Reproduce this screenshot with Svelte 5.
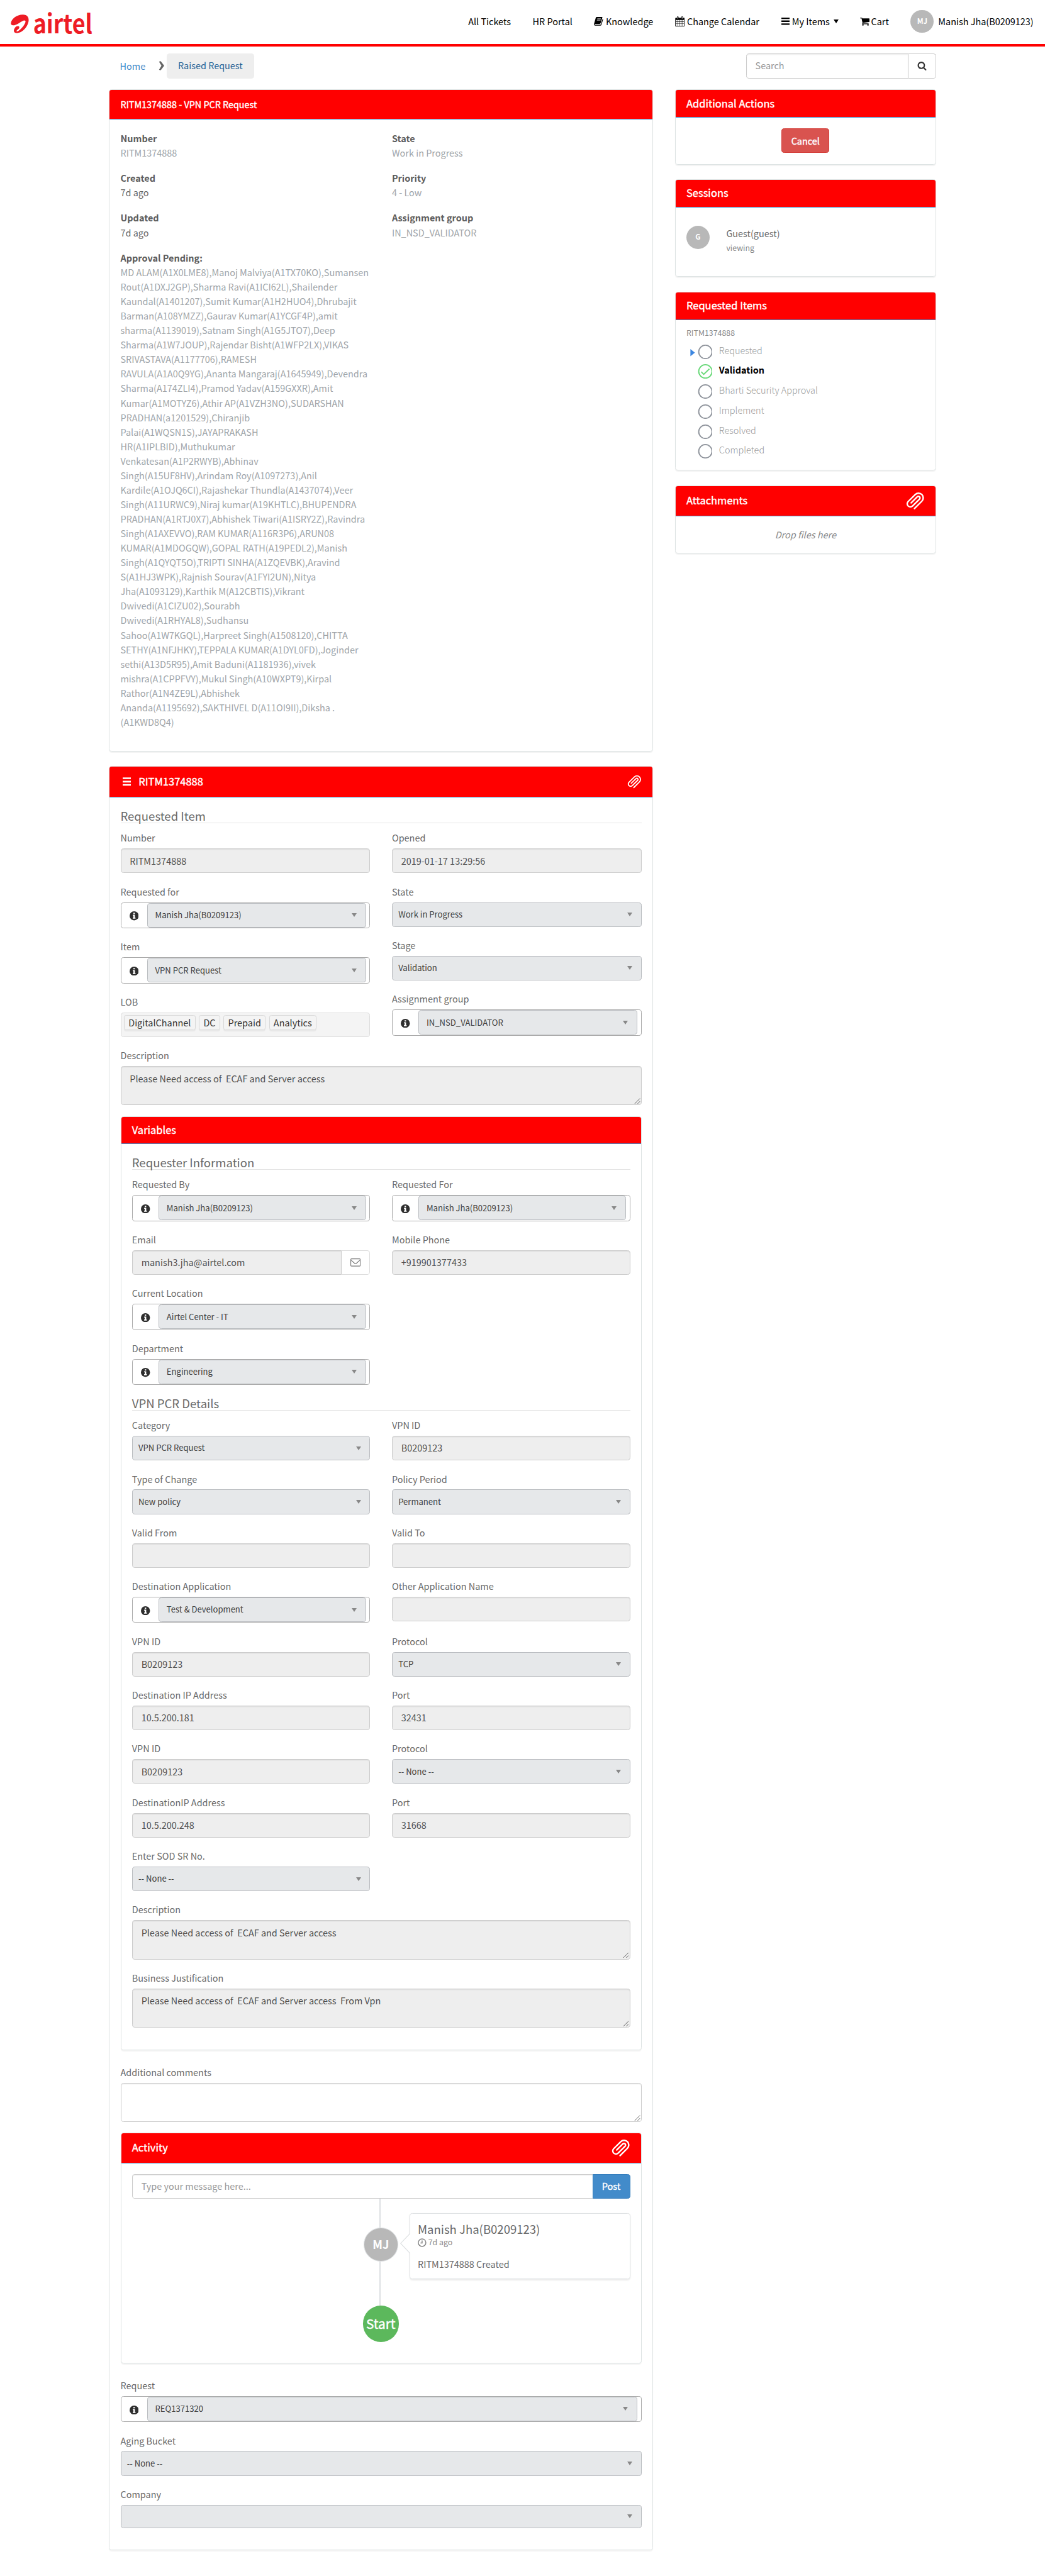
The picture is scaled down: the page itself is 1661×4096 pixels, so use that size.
<script>
  const approvers = [
    'MD ALAM(A1X0LME8),Manoj Malviya(A1TX70KO),Sumansen',
    'Rout(A1DXJ2GP),Sharma Ravi(A1ICI62L),Shailender',
    'Kaundal(A1401207),Sumit Kumar(A1H2HUO4),Dhrubajit',
    'Barman(A108YMZZ),Gaurav Kumar(A1YCGF4P),amit',
    'sharma(A1139019),Satnam Singh(A1G5JTO7),Deep',
    'Sharma(A1W7JOUP),Rajendar Bisht(A1WFP2LX),VIKAS',
    'SRIVASTAVA(A1177706),RAMESH',
    'RAVULA(A1A0Q9YG),Ananta Mangaraj(A1645949),Devendra',
    'Sharma(A174ZLI4),Pramod Yadav(A159GXXR),Amit',
    'Kumar(A1MOTYZ6),Athir AP(A1VZH3NO),SUDARSHAN',
    'PRADHAN(a1201529),Chiranjib',
    'Palai(A1WQSN1S),JAYAPRAKASH',
    'HR(A1IPLBID),Muthukumar',
    'Venkatesan(A1P2RWYB),Abhinav',
    'Singh(A15UF8HV),Arindam Roy(A1097273),Anil',
    'Kardile(A1OJQ6CI),Rajashekar Thundla(A1437074),Veer',
    'Singh(A11URWC9),Niraj kumar(A19KHTLC),BHUPENDRA',
    'PRADHAN(A1RTJ0X7),Abhishek Tiwari(A1ISRY2Z),Ravindra',
    'Singh(A1AXEVVO),RAM KUMAR(A116R3P6),ARUN08',
    'KUMAR(A1MDOGQW),GOPAL RATH(A19PEDL2),Manish',
    'Singh(A1QYQT5O),TRIPTI SINHA(A1ZQEVBK),Aravind',
    'S(A1HJ3WPK),Rajnish Sourav(A1FYI2UN),Nitya',
    'Jha(A1093129),Karthik M(A12CBTIS),Vikrant',
    'Dwivedi(A1CIZU02),Sourabh',
    'Dwivedi(A1RHYAL8),Sudhansu',
    'Sahoo(A1W7KGQL),Harpreet Singh(A1508120),CHITTA',
    'SETHY(A1NFJHKY),TEPPALA KUMAR(A1DYL0FD),Joginder',
    'sethi(A13D5R95),Amit Baduni(A1181936),vivek',
    'mishra(A1CPPFVY),Mukul Singh(A10WXPT9),Kirpal',
    'Rathor(A1N4ZE9L),Abhishek',
    'Ananda(A1195692),SAKTHIVEL D(A11OI9II),Diksha .',
    '(A1KWD8Q4)'
  ];
  const stages = ['Requested', 'Validation', 'Bharti Security Approval', 'Implement', 'Resolved', 'Completed'];
  const tags = ['DigitalChannel', 'DC', 'Prepaid', 'Analytics'];

  // field = [kind, label, value]
  const itemLeft = [
    ['input', 'Number', 'RITM1374888'],
    ['ref', 'Requested for', 'Manish Jha(B0209123)'],
    ['ref', 'Item', 'VPN PCR Request'],
    ['tags', 'LOB', '']
  ];
  const itemRight = [
    ['input', 'Opened', '2019-01-17 13:29:56'],
    ['select', 'State', 'Work in Progress'],
    ['select', 'Stage', 'Validation'],
    ['ref', 'Assignment group', 'IN_NSD_VALIDATOR']
  ];
  const requesterLeft = [
    ['ref', 'Requested By', 'Manish Jha(B0209123)'],
    ['email', 'Email', 'manish3.jha@airtel.com'],
    ['ref', 'Current Location', 'Airtel Center - IT'],
    ['ref', 'Department', 'Engineering']
  ];
  const requesterRight = [
    ['ref', 'Requested For', 'Manish Jha(B0209123)'],
    ['input', 'Mobile Phone', '+919901377433']
  ];
  const accessLeft = [
    ['select', 'Category', 'VPN PCR Request'],
    ['select', 'Type of Change', 'New policy'],
    ['input', 'Valid From', ''],
    ['ref', 'Destination Application', 'Test & Development']
  ];
  const accessRight = [
    ['input', 'VPN ID', 'B0209123'],
    ['select', 'Policy Period', 'Permanent'],
    ['input', 'Valid To', ''],
    ['input', 'Other Application Name', '']
  ];
  const targetLeft = [
    ['input', 'VPN ID', 'B0209123'],
    ['input', 'Destination IP Address', '10.5.200.181'],
    ['input', 'VPN ID', 'B0209123'],
    ['input', 'DestinationIP Address', '10.5.200.248'],
    ['select', 'Enter SOD SR No.', '-- None --']
  ];
  const targetRight = [
    ['select', 'Protocol', 'TCP'],
    ['input', 'Port', '32431'],
    ['select', 'Protocol', '-- None --'],
    ['input', 'Port', '31668']
  ];
</script>

{#snippet clip(size)}
  <svg class="clip" class:large={size === 'large'} viewBox="0 0 24 24">
    <path transform="matrix(0 1 1 0 0 0)" d="M22.2 10.8l-9.7 9.7a6 6 0 0 1-8.9-8.7l9.3-9.4a4.1 4.1 0 0 1 5.9 5.8l-9.2 9.3a2.1 2.1 0 0 1-3-3l8-8.1" />
  </svg>
{/snippet}

{#snippet info()}
  <svg class="info" viewBox="0 0 12 12">
    <circle cx="6" cy="6" r="6" fill="#2e2e2e" />
    <path fill="#fff" d="M5 1.8h2v1.7H5zM4.2 4.5H7v3.9h.8v1.3H4.2V8.400H5V5.800h-.8z" />
  </svg>
{/snippet}

{#snippet grip()}
  <svg class="grip" viewBox="0 0 8 8"><path d="M.5 8 8 .5M4.500 8 8 4.500" /></svg>
{/snippet}

{#snippet area(label, value, plain)}
  <div class="field">
    <div class="label">{label}</div>
    <div class="box area" class:plain>{value}{@render grip()}</div>
  </div>
{/snippet}

{#snippet field(f)}
  <div class="field">
    <div class="label">{f[1]}</div>
    {#if f[0] === 'input'}
      <div class="box input">{f[2]}</div>
    {:else if f[0] === 'select'}
      <div class="box select"><span>{f[2]}</span><i class="arrow"></i></div>
    {:else if f[0] === 'ref'}
      <div class="ref">
        <div class="ref-info">{@render info()}</div>
        <div class="box select"><span>{f[2]}</span><i class="arrow"></i></div>
      </div>
    {:else if f[0] === 'email'}
      <div class="group">
        <div class="box input">{f[2]}</div>
        <div class="mail">
          <svg viewBox="0 0 14 11"><rect x=".5" y=".5" width="13" height="10" rx="1" /><path d="M1 2.500 5.800 6.700Q7 7.600 8.200 6.700L13 2.500" /></svg>
        </div>
      </div>
    {:else}
      <div class="box tags">{#each tags as t}<span>{t}</span>{/each}</div>
    {/if}
  </div>
{/snippet}

{#snippet columns(left, right)}
  <div class="columns">
    <div>{#each left as f}{@render field(f)}{/each}</div>
    <div>{#each right as f}{@render field(f)}{/each}</div>
  </div>
{/snippet}

{#snippet fact(name, value, dark)}
  <div class="fact"><b>{name}</b><span class:dark>{value}</span></div>
{/snippet}

<div class="page">
  <header>
    <svg class="logo" viewBox="0 0 900 300">
      <path d="M90 130C92 95 140 58 190 59C225 60 238 80 237 105C235 150 190 212 135 211C115 210 112 195 117 180C123 162 138 152 150 154C162 156 162 168 155 176C148 184 135 188 137 197C150 204 205 150 211 118C213 105 200 103 188 110C165 122 135 147 108 147C96 147 89 140 90 130Z" />
      <text x="274" y="211" textLength="490" lengthAdjust="spacingAndGlyphs">airtel</text>
    </svg>
    <nav>
      <a>All Tickets</a>
      <a>HR Portal</a>
      <a class="book"><svg viewBox="0 0 26 24"><path d="M8 0h14q2 0 1.300 2L18.500 17q-.7 2.200-3 2.200H4q-1.600 0-1.800 1 0 1.200 1.800 1.200h13.500q1.200 0 1.800-1.800L24 5q1.700.6 1.200 2.300L20.700 21.500q-.8 2.500-3 2.500H3q-3.200-.4-2.900-4L5 2.500Q5.800 0 8 0Z" /><path class="gap" d="M9.300 5h10M8.300 8.800h10" /></svg>Knowledge</a>
      <a class="cal"><svg viewBox="0 0 26 28"><path fill-rule="evenodd" d="M2 4h22q2 0 2 2v20q0 2-2 2H2q-2 0-2-2V6q0-2 2-2ZM2 10v4.500h4.600V10ZM7.700 10v4.500h4.700V10ZM13.500 10v4.500h4.700V10ZM19.300 10v4.500H24V10ZM2 15.600v4.300h4.600v-4.300ZM7.700 15.600v4.300h4.700v-4.300ZM13.500 15.600v4.300h4.700v-4.300ZM19.300 15.600v4.300H24v-4.300ZM2 21v5h4.600v-5ZM7.700 21v5h4.700v-5ZM13.500 21v5h4.700v-5ZM19.300 21v5H24v-5Z" /><path class="ring" d="M7 2v4.500M19 2v4.500" /><path class="gap" d="M7 2v4.500M19 2v4.500" /></svg>Change Calendar</a>
      <a class="list"><svg viewBox="0 0 12 10"><path d="M0 0h12v2H0zM0 4h12v2H0zM0 8h12v2H0z" /></svg>My Items<i class="caret"></i></a>
      <a class="cart"><svg viewBox="0 128 1664 1536"><path d="M640 1536q0 52-38 90t-90 38-90-38-38-90 38-90 90-38 90 38 38 90zm896 0q0 52-38 90t-90 38-90-38-38-90 38-90 90-38 90 38 38 90zm128-1088v512q0 24-16.500 42.500t-40.500 21.500l-1044 122q13 60 13 70 0 16-24 64h920q26 0 45 19t19 45-19 45-45 19h-1024q-26 0-45-19t-19-45q0-11 8-31.500t16-36 21.500-40 15.500-29.500l-177-823h-204q-26 0-45-19t-19-45 19-45 45-19h256q16 0 28.500 6.500t19.500 15.500 13 24.500 8 26 5.500 29.500 4.500 26h1201q26 0 45 19t19 45z" /></svg>Cart</a>
      <a class="user"><span class="avatar">MJ</span>Manish Jha(B0209123)</a>
    </nav>
  </header>

  <div class="container">
    <div class="top">
      <div class="crumbs">
        <a>Home</a>
        <svg viewBox="0 0 8 13"><path d="M.6.800 3 .3 7.800 6.500 3 12.700.6 12.200 4 6.500Z" /></svg>
        <a class="here">Raised Request</a>
      </div>
      <div class="search">
        <div class="query">Search</div>
        <div class="go"><svg viewBox="0 0 1792 1792"><path d="M1216 832q0-185-131.500-316.500t-316.500-131.500-316.500 131.500-131.500 316.500 131.500 316.500 316.500 131.500 316.500-131.500 131.500-316.500zm512 832q0 52-38 90t-90 38q-54 0-90-38l-343-342q-179 124-399 124-143 0-273.500-55.500t-225-150-150-225-55.500-273.500 55.500-273.500 150-225 225-150 273.500-55.500 273.500 55.500 225 150 150 225 55.500 273.500q0 220-124 399l343 343q37 37 37 90z" /></svg></div>
      </div>
    </div>

    <div class="body">
      <main>
        <section class="panel summary">
          <div class="head">RITM1374888 - VPN PCR Request</div>
          <div class="content">
            <div class="columns">
              <div>
                {@render fact('Number', 'RITM1374888', false)}
                {@render fact('Created', '7d ago', true)}
                {@render fact('Updated', '7d ago', true)}
                <div class="fact">
                  <b>Approval Pending:</b>
                  {#each approvers as line}<span>{line}</span>{/each}
                </div>
              </div>
              <div>
                {@render fact('State', 'Work in Progress', false)}
                {@render fact('Priority', '4 - Low', false)}
                {@render fact('Assignment group', 'IN_NSD_VALIDATOR', false)}
              </div>
            </div>
          </div>
        </section>

        <section class="panel record">
          <div class="head">
            <svg class="menu" viewBox="0 0 12 12"><path d="M0 0h12v2.300H0zM0 4.800h12v2.300H0zM0 9.500h12v2.300H0z" /></svg>
            <span>RITM1374888</span>
            {@render clip('small')}
          </div>
          <div class="content">
            <div class="legend">Requested Item</div>
            {@render columns(itemLeft, itemRight)}
            {@render area('Description', 'Please Need access of  ECAF and Server access', false)}

            <section class="panel variables">
              <div class="head">Variables</div>
              <div class="content">
                <div class="legend">Requester Information</div>
                {@render columns(requesterLeft, requesterRight)}
                <div class="legend">VPN PCR Details</div>
                {@render columns(accessLeft, accessRight)}
                {@render columns(targetLeft, targetRight)}
                {@render area('Description', 'Please Need access of  ECAF and Server access', false)}
                {@render area('Business Justification', 'Please Need access of  ECAF and Server access  From Vpn', false)}
              </div>
            </section>

            {@render area('Additional comments', '', true)}

            <section class="panel activity">
              <div class="head"><span>Activity</span>{@render clip('large')}</div>
              <div class="content">
                <div class="post">
                  <div class="message">Type your message here...</div>
                  <div class="send">Post</div>
                </div>
                <div class="timeline">
                  <div class="rail">
                    <div class="line first"></div>
                    <div class="bubble">MJ</div>
                    <div class="line second"></div>
                    <div class="start">Start</div>
                  </div>
                  <div class="card">
                    <svg class="beak" viewBox="0 0 14 28"><path d="M14 0 .7 14 14 28" /></svg>
                    <div class="who">Manish Jha(B0209123)</div>
                    <div class="when"><svg viewBox="0 0 12 12"><circle cx="6" cy="6" r="5.200" /><path d="M6 3v3.500H3.800" /></svg>7d ago</div>
                    <div class="what">RITM1374888 Created</div>
                  </div>
                </div>
              </div>
            </section>

            {@render field(['ref', 'Request', 'REQ1371320'])}
            {@render field(['select', 'Aging Bucket', '-- None --'])}
            <div class="short">{@render field(['select', 'Company', ''])}</div>
          </div>
        </section>
      </main>

      <aside>
        <section class="panel">
          <div class="head">Additional Actions</div>
          <div class="content"><div class="cancel">Cancel</div></div>
        </section>
        <section class="panel sessions">
          <div class="head">Sessions</div>
          <div class="content">
            <span class="avatar">G</span>
            <div><div class="guest">Guest(guest)</div><div class="viewing">viewing</div></div>
          </div>
        </section>
        <section class="panel items">
          <div class="head">Requested Items</div>
          <div class="content">
            <div class="ritm">RITM1374888</div>
            {#each stages as s, i}
              <div class="stage" class:current={i === 1}>
                <svg viewBox="0 0 31 20">
                  {#if i === 0}<path class="tri" d="M.300 6 6.500 11 .300 16Z" />{/if}
                  <circle cx="21" cy="10" r="9.200" />
                  {#if i === 1}<path class="tick" d="M15.200 10.500 18.700 14 26.500 6.500" />{/if}
                </svg>
                <span>{s}</span>
              </div>
            {/each}
          </div>
        </section>
        <section class="panel attachments">
          <div class="head"><span>Attachments</span>{@render clip('large')}</div>
          <div class="content">Drop files here</div>
        </section>
      </aside>
    </div>
  </div>
</div>

<style>
  :global(body) { background: #fff; overflow: hidden; }
  .page {
    zoom: 1.1532;
    width: 1440.400px;
    height: 3551px;
    font-family: 'Noto Sans CJK SC', 'Noto Sans', sans-serif;
    font-size: 12.530px;
    line-height: 19px;
    color: #6a6a6a;
  }
  .page :global(*) { box-sizing: border-box; }
  svg { display: block; flex: none; }

  header { height: 64px; border-bottom: 4px solid #f00; display: flex; justify-content: space-between; }
  .logo { width: 150px; height: 50px; margin-top: 10px; fill: #ee1c25; overflow: visible; }
  .logo text { font-size: 216px; font-weight: 700; }
  nav { display: flex; align-items: center; gap: 30px; height: 59px; padding-right: 16px; color: #000; white-space: nowrap; }
  nav a { display: flex; align-items: center; }
  .book svg { width: 13px; height: 12px; margin-right: 3px; }
  .cal svg { width: 13.500px; height: 14px; margin-right: 3px; }
  .list svg { width: 12px; height: 10px; margin-right: 3px; }
  .cart svg { width: 13px; height: 12px; margin-right: 2px; }
  .gap { stroke: #fff; stroke-width: 1.500; fill: none; }
  .ring { stroke: #000; stroke-width: 4; stroke-linecap: round; }
  .caret { margin-left: 5px; border: 4px solid transparent; border-top: 5.300px solid #000; border-bottom: 0; }
  .avatar {
    width: 32px; height: 32px; border-radius: 50%; background: #b8b8b8; color: #fff; flex: none;
    font-size: 10px; font-weight: 700; display: flex; align-items: center; justify-content: center;
  }
  nav .avatar { margin-right: 6px; }

  .container { width: 1140px; margin: 0 auto; padding-top: 10px; }
  .top { display: flex; justify-content: space-between; height: 34px; margin-bottom: 15.200px; }
  .crumbs { display: flex; align-items: center; padding-left: 15px; color: #428bca; }
  .crumbs svg { width: 8px; height: 13px; margin: 0 3px 0 18px; fill: #666; }
  .here { background: #eee; color: #2a6496; border-radius: 4px; padding: 7px 16px 8px; }
  .search { display: flex; width: 262px; }
  .query {
    flex: 1; border: 1px solid #ccc; border-radius: 4px 0 0 4px; padding: 6px 12px; color: #999;
    box-shadow: inset 0 1px 1px rgba(0, 0, 0, 0.075);
  }
  .go { width: 38px; border: 1px solid #ccc; border-left: 0; border-radius: 0 4px 4px 0; display: flex; align-items: center; justify-content: center; }
  .go svg { width: 13px; height: 13px; fill: #333; }

  .body { display: flex; gap: 30px; align-items: flex-start; }
  main { width: 750px; }
  aside { width: 360px; }
  .panel { border: 1px solid #dde3e3; border-radius: 4px; margin-bottom: 20.270px; box-shadow: 0 1px 1px rgba(0, 0, 0, 0.05); }
  .head {
    height: 38px; background: #f00; border-bottom: 1px solid #428bca; border-radius: 3px 3px 0 0; color: #fff;
    padding: 0 15px; font-size: 14.300px; display: flex; align-items: center; justify-content: space-between;
  }
  .head, .cancel, .send, .start { -webkit-text-stroke: 0.350px #fff; }
  .content { padding: 15px; }
  .clip { width: 20px; height: 19px; fill: none; stroke: #fff; stroke-width: 2; stroke-linecap: round; }
  .clip.large { width: 26px; height: 25px; }

  .summary .head { height: 41px; font-size: 12.480px; }
  .columns { display: grid; grid-template-columns: 1fr 1fr; column-gap: 30px; align-items: start; }
  .fact { margin-bottom: 15px; color: #a0a5a9; line-height: 20px; white-space: nowrap; }
  .fact b, .fact span { display: block; }
  .fact b { color: #5c5c5c; font-weight: 700; }
  .fact .dark { color: #666; }

  .record > .head { height: 43px; justify-content: flex-start; padding: 0 15px 0 18px; }
  .record > .head .clip { margin-left: auto; }
  .menu { width: 11.500px; height: 12px; fill: #fff; margin-right: 10.500px; }
  .legend { height: 20px; line-height: 18.600px; border-bottom: 1px solid #e3e3e3; margin-bottom: 10px; font-size: 16.100px; }
  .field { margin-bottom: 15px; }
  .label { line-height: 20px; margin-bottom: 5px; }
  .box { border: 1px solid #ccc; border-radius: 4px; white-space: pre; }
  .input { height: 34px; padding: 6.500px 12px; background: #eee; color: #505050; box-shadow: inset 0 1px 1px rgba(0, 0, 0, 0.075); }
  .area { height: 54px; padding: 6.500px 12px; background: #eee; color: #505050; box-shadow: inset 0 1px 1px rgba(0, 0, 0, 0.075); position: relative; }
  .area.plain { background: #fff; }
  .grip { position: absolute; right: 1px; bottom: 1px; width: 8px; height: 8px; stroke: #555; stroke-width: 0.800; }
  .select {
    height: 34px; padding: 0 12px 0 8px; background: #e6e8ea; border-color: #b9bcc0; color: #404040; font-size: 11.350px;
    display: flex; align-items: center; justify-content: space-between;
  }
  .select span { padding-bottom: 0.500px; }
  .arrow { border: 3.500px solid transparent; border-top: 5.300px solid #888; border-bottom: 0; }
  .short .select { height: 32px; }
  .ref { height: 36px; border: 1px solid #aaa; border-radius: 4px; display: flex; padding-right: 5px; }
  .ref .select { flex: 1; padding-left: 10px; }
  .ref-info { width: 36px; display: flex; align-items: center; justify-content: center; padding-top: 2px; }
  .info { width: 12.500px; height: 12.500px; }
  .group { display: flex; }
  .group .input { flex: 1; border-radius: 4px 0 0 4px; }
  .mail { width: 39px; border: 1px solid #ddd; border-left: 0; border-radius: 0 4px 4px 0; display: flex; align-items: center; justify-content: center; }
  .mail svg { width: 14px; height: 11px; fill: none; stroke: #777; }
  .tags { height: 34px; padding: 3px 4px; background: #f4f4f4; border-color: #ddd; display: flex; gap: 5px; }
  .tags span { height: 21px; line-height: 19px; padding: 0 5.300px; border: 1px solid #d8d8d8; border-radius: 3px; color: #333; box-shadow: 0 1px 1px rgba(0, 0, 0, 0.050); }

  .activity .head { height: 41px; }
  .activity .content { height: 275px; }
  .post { display: flex; height: 34px; }
  .message { flex: 1; border: 1px solid #ccc; border-right: 0; border-radius: 4px 0 0 4px; padding: 6.500px 12px; color: #999; box-shadow: inset 0 1px 1px rgba(0, 0, 0, 0.075); }
  .send { width: 52px; background: #428bca; border: 1px solid #357ebd; border-radius: 0 4px 4px 0; color: #fff; text-align: center; padding-top: 6.500px; }
  .timeline { display: flex; padding-left: 318px; }
  .rail { width: 50px; display: flex; flex-direction: column; align-items: center; margin-right: 15px; }
  .line { width: 2px; background: #dde0e2; margin-right: 2px; }
  .first { height: 39.500px; }
  .second { height: 61px; }
  .bubble { width: 48px; height: 47px; border-radius: 50%; background: #b8b8b8; border: 1px solid #dde0e2; color: #fff; font-size: 16px; font-weight: 700; display: flex; align-items: center; justify-content: center; }
  .start { width: 50px; height: 50px; border-radius: 50%; background: #5cb85c; color: #fff; font-size: 18px; display: flex; align-items: center; justify-content: center; }
  .card { flex: 1; height: 91px; margin-top: 20px; border: 1px solid #dde0e2; border-radius: 4px; box-shadow: 0 1px 2px rgba(0, 0, 0, 0.080); padding: 10.500px 10px; position: relative; }
  .beak { position: absolute; left: -14px; top: 27px; width: 14px; height: 28px; fill: #fff; stroke: #dde0e2; }
  .who { font-size: 16.100px; line-height: 20px; }
  .when { display: flex; align-items: center; gap: 2.500px; font-size: 10.740px; color: #888; }
  .when svg { width: 12px; height: 12px; fill: none; stroke: #888; stroke-width: 1.300; }
  .what { margin-top: 10px; }

  .cancel { width: 66px; height: 34px; margin: 0 auto; padding-top: 6.500px; border: 1px solid #d43f3a; border-radius: 4px; background: #d9534f; color: #fff; text-align: center; }
  .sessions .content { height: 95px; padding-top: 25px; display: flex; }
  .sessions .avatar { margin-right: 23px; }
  .guest { line-height: 20px; }
  .viewing { color: #888; font-size: 10.740px; line-height: 21px; }
  .items .content { height: 207px; padding: 8px 15px; }
  .ritm { font-size: 10.740px; color: #8c8c8c; line-height: 20px; margin-bottom: 6px; }
  .stage { display: flex; height: 27.500px; padding-left: 5px; color: #999; font-weight: 300; }
  .stage svg { width: 31px; height: 20px; fill: none; stroke: #8f949c; stroke-width: 1.600; }
  .stage .tri { fill: #3b86e0; stroke: none; }
  .stage span { padding-left: 9px; line-height: 16px; }
  .current { color: #000; font-weight: 700; }
  .current svg { stroke: #67d877; }
  .attachments .head { height: 42px; }
  .attachments .content { height: 50px; text-align: center; font-style: italic; color: #888; line-height: 20px; }
</style>
